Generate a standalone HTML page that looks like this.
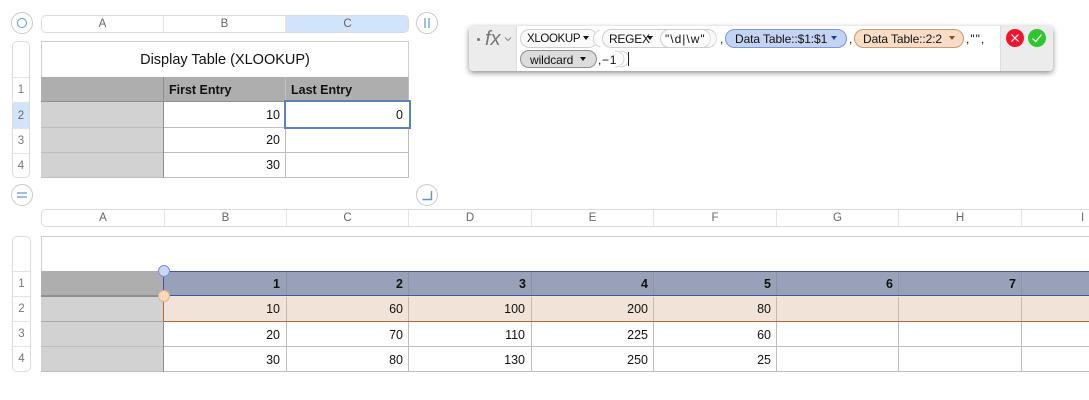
<!DOCTYPE html>
<html><head><meta charset="utf-8">
<style>
html,body{margin:0;padding:0;background:#fff}
body{width:1089px;height:400px;overflow:hidden;position:relative;font-family:"Liberation Sans",sans-serif;color:#111}
div,span.a{position:absolute;box-sizing:border-box}
.h{font-size:11.5px;color:#666;text-align:center;height:16px;line-height:16px;border-right:1px solid #e4e4e4;top:0}
.hb{background:#fff;border:1px solid #dcdcdc;border-radius:5px;overflow:hidden}
.r{font-size:11.5px;color:#777;text-align:center;left:0;width:100%;border-top:1px solid #e4e4e4}
.c{font-size:12.5px;text-align:right;padding-right:6px;height:25px;line-height:25px}
.b{font-weight:bold}
.circ{width:22px;height:22px;border-radius:50%;border:1px solid #c9c9c9;background:#fff}
.v{width:1px;background:#bdbdbd}
.l{height:1px;background:#bdbdbd}
.vh{width:1px;background:#8b93ab;top:272px;height:23px}
.vp{width:1px;background:#c9b8ac;top:297px;height:24px}
.p{font-family:"Liberation Sans",sans-serif;font-size:12px;white-space:nowrap;line-height:18px;letter-spacing:-.1px}
.pill{border-radius:10px;height:19px;border:1px solid #cfcfcf}
.tri{width:0;height:0;border-left:3px solid transparent;border-right:3px solid transparent;border-top:4px solid #111}
</style></head><body>

<!-- top table headers -->
<div class="circ" style="left:11px;top:12px"></div>
<div style="left:17px;top:18px;width:10px;height:10px;border:1.5px solid #5b9be0;border-radius:50%"></div>
<div class="circ" style="left:416px;top:12px"></div>
<div style="left:424px;top:18px;width:2px;height:10px;background:#9dbfe6"></div>
<div style="left:428px;top:18px;width:2px;height:10px;background:#9dbfe6"></div>
<div class="circ" style="left:11px;top:184px"></div>
<div style="left:17px;top:192px;width:10px;height:2px;background:#9dbfe6"></div>
<div style="left:17px;top:196px;width:10px;height:2px;background:#9dbfe6"></div>
<div class="circ" style="left:416px;top:184px"></div>
<svg style="position:absolute;left:416px;top:184px" width="22" height="22"><path d="M6.5 15.5H15.5V7" fill="none" stroke="#5b93d4" stroke-width="1.4"/></svg>

<div class="hb" style="left:41px;top:15px;width:368px;height:18px">
<div class="h" style="left:0;width:122px">A</div>
<div class="h" style="left:122px;width:122px">B</div>
<div class="h" style="left:244px;width:123px;background:#d2e4fa;border:0">C</div>
</div>

<div class="hb" style="left:12px;top:41px;width:18px;height:137px">
<div class="r" style="top:35px;height:25px;line-height:25px">1</div>
<div class="r" style="top:60px;height:26px;line-height:26px;background:#d2e4fa;color:#666">2</div>
<div class="r" style="top:86px;height:25px;line-height:25px">3</div>
<div class="r" style="top:111px;height:25px;line-height:25px">4</div>
</div>

<!-- top table -->
<div style="left:41px;top:41px;width:368px;height:37px;border:1px solid #cfcfcf;border-bottom:0;background:#fff;text-align:center;font-size:14.5px;line-height:37px">Display Table (XLOOKUP)</div>
<div style="left:41px;top:77px;width:368px;height:25px;background:#aeaeae"></div>
<div style="left:41px;top:102px;width:123px;height:75px;background:#d2d2d2"></div>
<div class="l" style="left:41px;top:101px;width:368px;background:#8f8f8f"></div>
<div class="l" style="left:41px;top:127px;width:368px"></div>
<div class="l" style="left:41px;top:152px;width:368px"></div>
<div class="l" style="left:41px;top:177px;width:368px"></div>
<div class="v" style="left:163px;top:77px;height:101px;background:#8f8f8f"></div>
<div class="v" style="left:285px;top:77px;height:101px"></div>
<div class="v" style="left:408px;top:77px;height:101px"></div>
<div class="c b" style="left:169px;top:78px;text-align:left;padding:0">First Entry</div>
<div class="c b" style="left:291px;top:78px;text-align:left;padding:0">Last Entry</div>
<div class="c" style="left:164px;top:103px;width:122px">10</div>
<div class="c" style="left:164px;top:128px;width:122px">20</div>
<div class="c" style="left:164px;top:153px;width:122px">30</div>
<div class="c" style="left:284px;top:100px;width:127px;height:29px;line-height:26px;border:2px solid #5a83bd;padding-right:6px;background:#fff">0</div>

<!-- bottom table headers -->
<div class="hb" style="left:41px;top:209px;width:1060px;height:18px">
<div class="h" style="left:0;width:123px">A</div>
<div class="h" style="left:123px;width:122px">B</div>
<div class="h" style="left:245px;width:122px">C</div>
<div class="h" style="left:367px;width:123px">D</div>
<div class="h" style="left:490px;width:122px">E</div>
<div class="h" style="left:612px;width:123px">F</div>
<div class="h" style="left:735px;width:122px">G</div>
<div class="h" style="left:857px;width:123px">H</div>
<div class="h" style="left:980px;width:78px;text-align:left;padding-left:59px">I</div>
</div>
<div class="hb" style="left:12px;top:236px;width:19px;height:136px">
<div class="r" style="top:34px;height:25px;line-height:25px">1</div>
<div class="r" style="top:59px;height:25px;line-height:25px">2</div>
<div class="r" style="top:84px;height:25px;line-height:25px">3</div>
<div class="r" style="top:109px;height:26px;line-height:25px">4</div>
</div>

<!-- bottom table -->
<div style="left:41px;top:236px;width:1060px;height:36px;border:1px solid #cfcfcf;border-bottom:0"></div>
<div style="left:41px;top:271px;width:123px;height:25px;background:#aeaeae"></div>
<div style="left:41px;top:296px;width:123px;height:76px;background:#d2d2d2"></div>
<div style="left:164px;top:271px;width:925px;height:25px;background:#99a1b9"></div>
<div style="left:164px;top:296px;width:925px;height:25px;background:#f2e3d9"></div>
<div class="l" style="left:41px;top:295px;width:123px;height:2px;background:#8f8f8f"></div>
<div class="l" style="left:41px;top:321px;width:123px;background:#a9a9a9"></div>
<div class="l" style="left:41px;top:346px;width:1048px"></div>
<div class="l" style="left:41px;top:371px;width:1048px"></div>
<div class="l" style="left:164px;top:321px;width:925px;background:#a9683c"></div>
<div class="v" style="left:286px;top:322px;height:50px"></div>
<div class="v" style="left:408px;top:322px;height:50px"></div>
<div class="v" style="left:531px;top:322px;height:50px"></div>
<div class="v" style="left:653px;top:322px;height:50px"></div>
<div class="v" style="left:776px;top:322px;height:50px"></div>
<div class="v" style="left:898px;top:322px;height:50px"></div>
<div class="v" style="left:1021px;top:322px;height:50px"></div>
<div class="vh" style="left:286px"></div><div class="vp" style="left:286px"></div>
<div class="vh" style="left:408px"></div><div class="vp" style="left:408px"></div>
<div class="vh" style="left:531px"></div><div class="vp" style="left:531px"></div>
<div class="vh" style="left:653px"></div><div class="vp" style="left:653px"></div>
<div class="vh" style="left:776px"></div><div class="vp" style="left:776px"></div>
<div class="vh" style="left:898px"></div><div class="vp" style="left:898px"></div>
<div class="vh" style="left:1021px"></div><div class="vp" style="left:1021px"></div>
<div class="v" style="left:163px;top:296px;height:76px;background:#8f8f8f"></div>
<div class="l" style="left:164px;top:271px;width:925px;background:#3d55ad"></div>
<div class="l" style="left:164px;top:295px;width:925px;background:#3d55ad"></div>
<div class="v" style="left:163px;top:271px;height:25px;background:#3d55ad"></div>
<div class="v" style="left:163px;top:296px;height:25px;background:#b0693a"></div>
<div style="left:158px;top:265px;width:12px;height:12px;border-radius:50%;background:#cbd5f5;border:1px solid #7d8ed8"></div>
<div style="left:158px;top:290px;width:12px;height:12px;border-radius:50%;background:#fbd9bc;border:1px solid #e8b184"></div>

<div class="c b" style="left:164px;top:272px;width:116px;padding:0">1</div>
<div class="c b" style="left:286px;top:272px;width:117px;padding:0">2</div>
<div class="c b" style="left:408px;top:272px;width:118px;padding:0">3</div>
<div class="c b" style="left:531px;top:272px;width:117px;padding:0">4</div>
<div class="c b" style="left:653px;top:272px;width:118px;padding:0">5</div>
<div class="c b" style="left:776px;top:272px;width:117px;padding:0">6</div>
<div class="c b" style="left:898px;top:272px;width:118px;padding:0">7</div>

<div class="c" style="left:164px;top:297px;width:122px">10</div>
<div class="c" style="left:286px;top:297px;width:123px">60</div>
<div class="c" style="left:408px;top:297px;width:123px">100</div>
<div class="c" style="left:531px;top:297px;width:123px">200</div>
<div class="c" style="left:653px;top:297px;width:124px">80</div>
<div class="c" style="left:164px;top:323px;width:122px">20</div>
<div class="c" style="left:286px;top:323px;width:123px">70</div>
<div class="c" style="left:408px;top:323px;width:123px">110</div>
<div class="c" style="left:531px;top:323px;width:123px">225</div>
<div class="c" style="left:653px;top:323px;width:124px">60</div>
<div class="c" style="left:164px;top:348px;width:122px">30</div>
<div class="c" style="left:286px;top:348px;width:123px">80</div>
<div class="c" style="left:408px;top:348px;width:123px">130</div>
<div class="c" style="left:531px;top:348px;width:123px">250</div>
<div class="c" style="left:653px;top:348px;width:124px">25</div>

<!-- formula bar -->
<div style="left:469px;top:26px;width:584px;height:45px;background:#fff;border-radius:4px;box-shadow:0 2px 6px rgba(0,0,0,.45);overflow:hidden">
<div style="left:0;top:0;width:48px;height:45px;background:#ececec;border-right:1px solid #ddd"></div>
<div style="left:531px;top:0;width:53px;height:45px;background:#ececec;border-left:1px solid #ddd"></div>
</div>
<div style="left:477px;top:38px;width:3px;height:3px;border-radius:50%;background:#777"></div>
<div style="left:485px;top:27px;font:italic 20px/24px 'Liberation Sans',sans-serif;color:#777">fx</div>
<svg style="position:absolute;left:504px;top:36px" width="8" height="6"><path d="M1 1.5L4 4.5L7 1.5" fill="none" stroke="#888" stroke-width="1"/></svg>

<div class="pill" style="left:520px;top:29px;width:78px;background:#fafafa;border-right-color:transparent"></div>
<div class="p" style="left:527px;top:29.5px;font-size:11.5px;letter-spacing:-.35px">XLOOKUP</div>
<div class="tri" style="left:583px;top:36px"></div>
<svg style="position:absolute;left:592px;top:29px" width="16" height="19"><path d="M8 1A10 9 0 0 0 8 18" fill="none" stroke="#d5d5d5"/></svg>
<div class="pill" style="left:602px;top:29px;width:115px;background:#fafafa;border-right-color:#ddd"></div>
<div class="p" style="left:609px;top:29.5px;letter-spacing:-.25px">REGEX</div>
<div class="tri" style="left:647px;top:36px"></div>
<div class="pill" style="left:660px;top:29px;width:51px;background:#fff;border-right-color:#ddd"></div>
<div class="p" style="left:665px;top:29.5px;letter-spacing:1px">"\d|\w"</div>
<div class="p" style="left:720px;top:29.5px">,</div>
<div class="pill" style="left:725px;top:29px;width:122px;background:#c4d3f1;border-color:#7c98d6"></div>
<div class="p" style="left:735px;top:29.5px">Data Table::$1:$1</div>
<div class="tri" style="left:831px;top:36px;border-top-color:#1f3f9e"></div>
<div class="p" style="left:849px;top:29.5px">,</div>
<div class="pill" style="left:854px;top:29px;width:110px;background:#f8dcc5;border-color:#c99a73"></div>
<div class="p" style="left:863px;top:29.5px">Data Table::2:2</div>
<div class="tri" style="left:949px;top:36px;border-top-color:#8f4a17"></div>
<div class="p" style="left:966px;top:29.5px;letter-spacing:1px">,"",</div>

<div class="pill" style="left:520px;top:50px;width:77px;height:18px;background:#dcdcdc;border-color:#8e8e8e"></div>
<div class="p" style="left:530px;top:50.5px">wildcard</div>
<div class="tri" style="left:580px;top:57px"></div>
<div class="p" style="left:598px;top:50.5px;letter-spacing:.7px">,−1</div>
<svg style="position:absolute;left:614px;top:50px" width="16" height="18"><path d="M1 1A9 8 0 0 1 1 17M6 1A9 8 0 0 1 6 17" fill="none" stroke="#d5d5d5"/></svg>
<div style="left:628px;top:52px;width:1px;height:14px;background:#222"></div>

<div style="left:1006px;top:29px;width:18px;height:18px;border-radius:50%;background:#f0142c"></div>
<svg style="position:absolute;left:1006px;top:29px" width="18" height="18"><path d="M5.5 5.5L12.5 12.5M12.5 5.5L5.5 12.5" stroke="#fff" stroke-width="1.2" fill="none"/></svg>
<div style="left:1028px;top:29px;width:18px;height:18px;border-radius:50%;background:#2fc52f"></div>
<svg style="position:absolute;left:1028px;top:29px" width="18" height="18"><path d="M4.5 9.5L7.8 12.5L13.5 5.5" stroke="#fff" stroke-width="1.2" fill="none"/></svg>

</body></html>
